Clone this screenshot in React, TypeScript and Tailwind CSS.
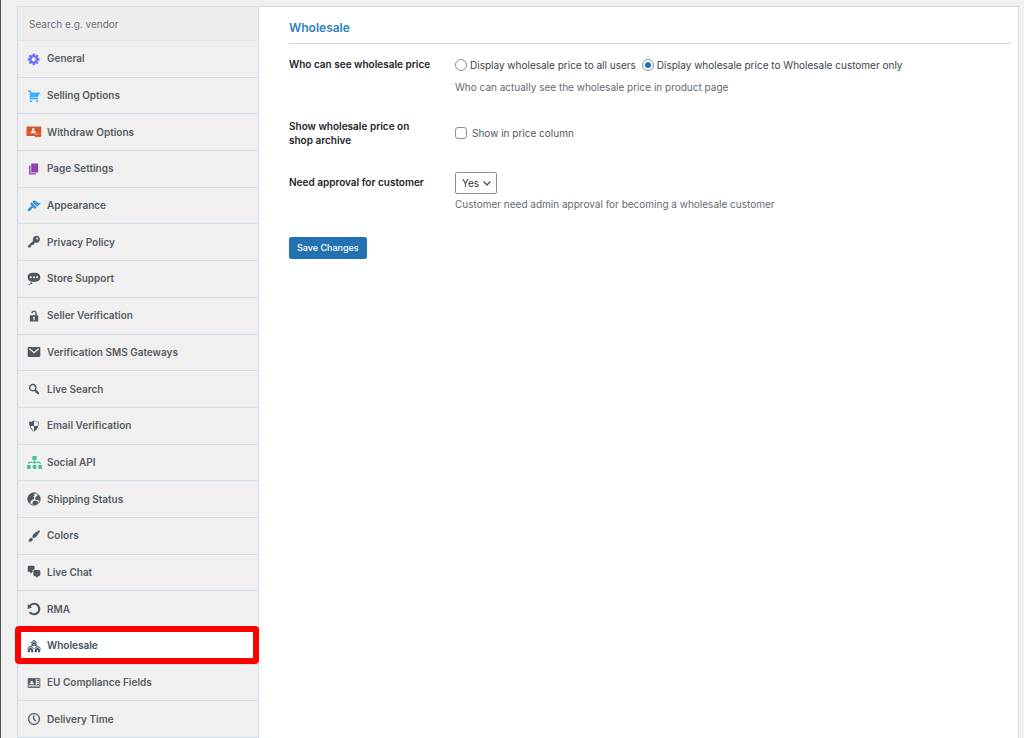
import React, { useState } from 'react';
import { FaSitemap } from 'react-icons/fa';

type MenuItem = {
  id: string;
  label: string;
  icon: React.ReactNode;
};

const Icon: React.FC<{ d: string; className?: string }> = ({ d, className = 'text-[#50575e]' }) => (
  <svg viewBox="0 0 20 20" fill="currentColor" fillRule="evenodd" className={`size-[14px] ${className}`} aria-hidden="true">
    <path d={d} />
  </svg>
);

const WithdrawIcon: React.FC = () => (
  <svg viewBox="0 0 16 14" className="w-4 h-[14px] -ml-px" aria-hidden="true">
    <path fill="#d9562b" d="M.5 1.5h14.800v9.500H.5z" />
    <path fill="#f0f0f0" d="M7.300 3a1.200 1.200 0 0 1 1.200 1.200c0 .7-.3 1.300-.6 1.600 1.100.3 2.100 1 2.200 2.500H4.500c.1-1.500 1.100-2.200 2.200-2.500-.3-.3-.6-.9-.6-1.600A1.200 1.200 0 0 1 7.300 3z" />
    <path fill="none" stroke="#f0f0f0" strokeWidth=".6" d="M9 9.300h6.500M9 11.300h6.500" />
    <circle cx="10.500" cy="11" r="1.500" fill="#d9562b" />
    <circle cx="13.500" cy="10.500" r="1.700" fill="#d9562b" />
  </svg>
);

const GlobeIcon: React.FC = () => (
  <svg viewBox="0 0 20 20" className="size-[14px] text-[#50575e]" aria-hidden="true">
    <circle cx="10" cy="10" r="8.800" fill="none" stroke="currentColor" strokeWidth="1.400" />
    <path
      fill="currentColor"
      d="M11 1.200C5.500.8 1.200 5 1.200 10c0 2.200.8 4.200 2.100 5.700L5 15.500l.3-2.300L7.500 11l2.300-.8.6-2.400-1.300-1.500L11 4.800l-.8-1.600zM13 6.800l2.800-2.900c2 1.500 3 3.700 3 6.100l-.8 3-2.600-1.500-3-.6-.9-2zM9.500 13l3.500-.9 2.800 1.900-.7 2.300-2.700 2-3.200.2-1.600-2.700z"
    />
  </svg>
);

const SupportIcon: React.FC = () => (
  <Icon d="M10 1c7 0 9 2.910 9 6.500S17 14 10 14s-9-2.910-9-6.500S3 1 10 1zM5.500 9C6.330 9 7 8.330 7 7.500S6.330 6 5.500 6 4 6.670 4 7.500 4.670 9 5.500 9zM10 9c.83 0 1.500-.67 1.500-1.500S10.830 6 10 6s-1.500.67-1.500 1.500S9.170 9 10 9zm4.500 0c.83 0 1.500-.67 1.500-1.500S15.330 6 14.500 6 13 6.670 13 7.500 13.670 9 14.500 9zM6 14.500a1.500 1.500 0 1 1 0 3 1.500 1.500 0 0 1 0-3zM3 17a1 1 0 1 1 0 2 1 1 0 0 1 0-2z" />
);

const MailIcon: React.FC = () => (
  <svg viewBox="0 0 20 20" className="size-[14px] text-[#50575e]" aria-hidden="true">
    <rect x="1" y="3" width="18" height="14" rx="1.500" fill="currentColor" />
    <path d="M3.500 5.500L10 11l6.500-5.500" fill="none" stroke="#f0f0f0" strokeWidth="1.800" />
  </svg>
);

const HousesIcon: React.FC = () => (
  <svg viewBox="0 0 20 20" fill="currentColor" fillRule="evenodd" className="size-[14px] text-[#3c4f60]" aria-hidden="true">
    <path d="M10 1.200l5 4.300-.8.900L10 2.900 5.800 6.400 5 5.500zM10 4l3.700 3.100v2.800H6.300V7.100zM9.100 7.200v1.900h1.800V7.200z" />
    <path d="M5 9.200l5 4.300-.8.900L5 10.900.8 14.400 0 13.500zM5 12l3.900 3.200V19H1.100v-3.800zm-.9 3.600V19h1.800v-3.400z" />
    <path d="M15 9.200l5 4.300-.8.900-4.200-3.500-4.200 3.500-.8-.9zM15 12l3.900 3.200V19h-7.800v-3.800zm-.9 3.600V19h1.800v-3.400z" />
  </svg>
);

const IdCardIcon: React.FC = () => (
  <svg viewBox="0 0 20 20" className="size-[14px] text-[#50575e]" aria-hidden="true">
    <path fill="none" stroke="currentColor" strokeWidth="1.300" d="M1.700 3.700h16.600v12.600H1.700z" />
    <path fill="currentColor" fillRule="evenodd" d="M2 4h10.500v9H2zm4.800 1.200c-1 0-1.700.8-1.700 1.800 0 .8.400 1.500.9 1.900-1.400.4-2.300 1.300-2.500 2.800h6.600c-.2-1.500-1.100-2.400-2.500-2.800.5-.4.900-1.100.9-1.900 0-1-.7-1.800-1.700-1.800z" />
    <path fill="currentColor" d="M5.200 5h3.200v2H5.200zM14 5h3v2h-3zM14 8.500h3v1.200h-3zM14 11.500h3v1.200h-3zM3 14h14v1H3z" />
  </svg>
);

const ClockIcon: React.FC = () => (
  <svg viewBox="0 0 20 20" fill="none" stroke="currentColor" strokeWidth="1.900" className="size-[14px] text-[#50575e]" aria-hidden="true">
    <circle cx="10" cy="10" r="7.800" />
    <path d="M9.500 5v5l3.300 3.300" />
  </svg>
);

const MENU: MenuItem[] = [
  {
    id: 'general',
    label: 'General',
    icon: <Icon className="text-[#6c70fb]" d="M18 12h-2.180c-.17.7-.44 1.350-.81 1.930l1.540 1.540-2.100 2.100-1.540-1.540c-.58.36-1.230.63-1.910.79V19H8v-2.180c-.68-.16-1.330-.43-1.910-.79l-1.540 1.540-2.120-2.120 1.540-1.540c-.36-.58-.63-1.230-.79-1.910H1V9.030h2.170c.16-.7.44-1.350.8-1.940L2.430 5.550l2.100-2.100 1.540 1.540c.58-.37 1.240-.64 1.930-.81V2h3v2.180c.68.16 1.330.43 1.910.79l1.540-1.540 2.120 2.120-1.540 1.540c.36.59.64 1.240.8 1.940H18V12zm-8.500 1.500c1.660 0 3-1.340 3-3s-1.340-3-3-3-3 1.340-3 3 1.340 3 3 3z" />,
  },
  {
    id: 'selling',
    label: 'Selling Options',
    icon: <Icon className="text-[#3eadfb]" d="M6 13h9c.55 0 1 .45 1 1s-.45 1-1 1H5c-.55 0-1-.45-1-1V4H2c-.55 0-1-.45-1-1s.45-1 1-1h3c.55 0 1 .45 1 1v2h13l-4 7H6v1zm-.5 3c.83 0 1.500.67 1.500 1.500S6.330 19 5.500 19 4 18.330 4 17.500 4.670 16 5.500 16zm9 0c.83 0 1.500.67 1.500 1.500s-.67 1.500-1.500 1.500-1.500-.67-1.500-1.500.67-1.500 1.500-1.500z" />,
  },
  { id: 'withdraw', label: 'Withdraw Options', icon: <WithdrawIcon /> },
  { id: 'pages', label: 'Page Settings', icon: <Icon className="text-[#8e44ad]" d="M6 15V2h10v13H6zm-1 1h8v2H3V5h2v11z" /> },
  {
    id: 'appearance',
    label: 'Appearance',
    icon: <Icon className="text-[#3498db]" d="M14.480 11.060L7.410 3.990l1.500-1.500c.5-.56 2.300-.47 3.510.32 1.210.8 1.430 1.280 2.910 2.100 1.180.64 2.450 1.260 4.450.85zm-.71.71L6.700 4.700 4.930 6.470c-.39.39-.39 1.020 0 1.410l1.060 1.060c.39.39.39 1.030 0 1.420-.6.6-1.430 1.110-2.210 1.690-.35.26-.7.53-1.010.84C1.430 14.230.4 16.080 1.400 17.070c.99 1 2.840-.03 4.180-1.360.31-.31.58-.66.85-1.020.57-.78 1.080-1.610 1.690-2.210.39-.39 1.020-.39 1.410 0l1.060 1.060c.39.39 1.020.39 1.410 0z" />,
  },
  {
    id: 'privacy',
    label: 'Privacy Policy',
    icon: <Icon d="M16.950 2.580c1.960 1.950 1.960 5.120 0 7.070-1.510 1.510-3.750 1.840-5.590 1.010l-1.870 3.310-2.990.31L5 18H2l-1-2 7.950-7.690c-.92-1.870-.62-4.180.93-5.730 1.950-1.960 5.120-1.960 7.070 0zm-2.510 3.790c.74 0 1.330-.6 1.330-1.340 0-.73-.59-1.330-1.330-1.330-.73 0-1.330.6-1.330 1.330 0 .74.6 1.340 1.330 1.340z" />,
  },
  { id: 'support', label: 'Store Support', icon: <SupportIcon /> },
  {
    id: 'seller',
    label: 'Seller Verification',
    icon: <Icon d="M12 9V6c0-1.100-.9-2-2-2s-2 .9-2 2H6c0-2.210 1.790-4 4-4s4 1.790 4 4v3h1c.55 0 1 .45 1 1v7c0 .55-.45 1-1 1H5c-.55 0-1-.45-1-1v-7c0-.55.45-1 1-1h7zm-1 7l-.36-2.150c.51-.24.86-.75.86-1.350 0-.83-.67-1.500-1.500-1.500s-1.500.67-1.500 1.500c0 .6.35 1.110.86 1.350L9 16h2z" />,
  },
  { id: 'sms', label: 'Verification SMS Gateways', icon: <MailIcon /> },
  {
    id: 'search',
    label: 'Live Search',
    icon: <Icon d="M12.140 4.180c1.870 1.870 2.110 4.750.72 6.890.12.1.22.21.36.31.2.16.47.36.81.59.34.24.56.39.66.47.42.31.73.57.94.78.32.32.6.65.84 1 .25.35.44.69.59 1.040.14.35.21.68.18 1-.02.32-.14.59-.36.81s-.49.34-.81.36c-.31.02-.65-.04-.99-.19-.35-.14-.7-.34-1.040-.59-.35-.24-.68-.52-1-.84-.21-.21-.47-.52-.77-.93-.1-.13-.25-.35-.47-.66-.22-.32-.4-.57-.56-.78-.16-.2-.29-.35-.44-.5-2.070 1.090-4.690.76-6.440-.98-2.140-2.150-2.140-5.640 0-7.780 2.150-2.150 5.630-2.150 7.780 0zm-1.410 6.360c1.360-1.370 1.360-3.580 0-4.950-1.370-1.370-3.590-1.370-4.950 0-1.370 1.370-1.370 3.580 0 4.950 1.360 1.370 3.580 1.370 4.950 0z" />,
  },
  { id: 'email', label: 'Email Verification', icon: <Icon d="M10 2s3 2 7 2c0 11-7 14-7 14S3 15 3 4c4 0 7-2 7-2zm0 8h5s1-1 1-5c0 0-5-1-6-2v7H5c1 4 5 7 5 7v-7z" /> },
  { id: 'social', label: 'Social API', icon: <FaSitemap preserveAspectRatio="none" className="h-[13px] w-[15px] text-[#4fc19c]" aria-hidden="true" /> },
  { id: 'shipping', label: 'Shipping Status', icon: <GlobeIcon /> },
  {
    id: 'colors',
    label: 'Colors',
    icon: <Icon d="M18.330 3.570s.27-.8-.31-1.360c-.53-.52-1.220-.24-1.220-.24-.61.3-5.760 3.470-7.670 5.570-.86.96-2.060 3.790-1.090 4.820.92.98 3.960-.17 4.790-1 2.060-2.060 5.210-7.170 5.500-7.790zM1.400 17.650c2.370-1.560 1.460-3.410 3.230-4.640.93-.65 2.220-.62 3.080.29.63.67.8 2.570-.16 3.460-1.570 1.450-4 1.550-6.150.89z" />,
  },
  {
    id: 'chat',
    label: 'Live Chat',
    icon: <Icon d="M11 6h-.82C9.070 6 8 7.200 8 8.160V10l-3 3v-3H3c-1.100 0-2-.9-2-2V3c0-1.100.9-2 2-2h6c1.100 0 2 .9 2 2v3zm0 1h6c1.100 0 2 .9 2 2v5c0 1.100-.9 2-2 2h-2v3l-3-3h-1c-1.100 0-2-.9-2-2V9c0-1.100.9-2 2-2z" />,
  },
  {
    id: 'rma',
    label: 'RMA',
    icon: <Icon d="M10.250 1.020c5.100 0 8.750 4.040 8.750 9s-3.650 9-8.750 9c-3.200 0-6.020-1.590-7.680-3.990l2.590-1.520c1.100 1.500 2.860 2.510 4.840 2.510 3.300 0 6-2.790 6-6s-2.700-6-6-6c-1.970 0-3.720 1-4.820 2.490L7 8.020l-6 2v-7L2.890 4.600c1.690-2.170 4.360-3.580 7.360-3.580z" />,
  },
  { id: 'wholesale', label: 'Wholesale', icon: <HousesIcon /> },
  { id: 'eu', label: 'EU Compliance Fields', icon: <IdCardIcon /> },
  { id: 'delivery', label: 'Delivery Time', icon: <ClockIcon /> },
];

const Sidebar: React.FC<{ activeId: string; onSelect: (id: string) => void }> = ({ activeId, onSelect }) => (
  <aside className="w-[241px] shrink-0 flex flex-col border-r border-[#cfdfea]">
    <input
      type="search"
      aria-label="Search settings"
      placeholder="Search e.g. vendor"
      className="h-[34px] w-full shrink-0 appearance-none rounded-none border-b border-[#e2e4e7] bg-[#ededed] px-[11px] text-[10px] text-[#50575e] placeholder:text-[#6c7178] outline-none"
    />
    <nav className="flex flex-1 flex-col">
      {MENU.map((item) => (
        <a
          key={item.id}
          href={`#${item.id}`}
          onClick={() => onSelect(item.id)}
          className={`relative flex min-h-9 flex-1 items-center border-b border-[#cfdfea] pl-[9px] text-[10px] font-semibold ${
            activeId === item.id ? 'bg-white text-[#3c4f60]' : 'text-[#565c63]'
          }`}
        >
          <span className="flex w-5 shrink-0 items-center">{item.icon}</span>
          {item.label}
          {activeId === item.id && <span className="pointer-events-none absolute -top-[2px] bottom-0 -left-[3px] -right-px z-10 rounded-sm border-[6px] border-[#ff0000]"></span>}
        </a>
      ))}
    </nav>
  </aside>
);

const RadioOption: React.FC<{ label: string; checked: boolean; onChange: () => void }> = ({ label, checked, onChange }) => (
  <label className="flex items-center gap-[3px] text-[#3c434a]">
    <input
      type="radio"
      name="wholesale_price_display"
      checked={checked}
      onChange={onChange}
      className="size-3 appearance-none rounded-full border border-[#8c8f94] bg-white p-[2px] bg-clip-content checked:bg-[#2271b1]"
    />
    {label}
  </label>
);

const App: React.FC = () => {
  const [activeId, setActiveId] = useState('wholesale');
  const [visibility, setVisibility] = useState('wholesale');
  const [showInArchive, setShowInArchive] = useState(false);
  const [approval, setApproval] = useState('yes');

  return (
    <div className="flex min-h-screen border-l border-[#50575e] bg-[#f0f0f0] pt-[6px] pr-[5px] pl-4 font-['Inter','Liberation_Sans',sans-serif] antialiased">
      <div className="flex flex-1 border border-b-0 border-[#cfdfea]">
        <Sidebar activeId={activeId} onSelect={setActiveId} />
        <main className="min-w-0 flex-1 bg-white pt-3 pr-[7px] pl-[30px]">
          <h2 className="border-b border-[#d0d7db] pb-[6px] text-[12px] leading-[18px] font-semibold text-[#2f82bd]">Wholesale</h2>
          <form onSubmit={(e) => e.preventDefault()} className="pt-[13px] text-[10px] leading-[14px]">
            <div className="grid grid-cols-[150px_1fr] gap-x-4">
              <div className="font-semibold text-[#1d2327]">Who can see wholesale price</div>
              <div className="text-[#646970]">
                <div role="radiogroup" aria-label="Who can see wholesale price" className="flex flex-wrap gap-x-[6px] pt-px">
                  <RadioOption label="Display wholesale price to all users" checked={visibility === 'all'} onChange={() => setVisibility('all')} />
                  <RadioOption label="Display wholesale price to Wholesale customer only" checked={visibility === 'wholesale'} onChange={() => setVisibility('wholesale')} />
                </div>
                <p className="pt-2">Who can actually see the wholesale price in product page</p>
              </div>
            </div>

            <div className="grid grid-cols-[150px_1fr] gap-x-4 pt-[25px]">
              <div className="pr-6 font-semibold text-[#1d2327]">Show wholesale price on shop archive</div>
              <label className="flex items-center gap-[5px] text-[#50575e]">
                <input
                  type="checkbox"
                  checked={showInArchive}
                  onChange={(e) => setShowInArchive(e.target.checked)}
                  className="size-3 appearance-none rounded-[3px] border border-[#8c8f94] bg-white checked:bg-[#2271b1]"
                />
                Show in price column
              </label>
            </div>

            <div className="grid grid-cols-[150px_1fr] gap-x-4 pt-[25px]">
              <label htmlFor="approval" className="pt-[3px] font-semibold text-[#1d2327]">Need approval for customer</label>
              <div className="text-[#646970]">
                <div className="relative w-[42px]">
                  <select
                    id="approval"
                    value={approval}
                    onChange={(e) => setApproval(e.target.value)}
                    className="block h-[22px] w-full appearance-none rounded-[2px] border border-[#8c8f94] bg-white pl-[6px] text-[10px] text-[#2c3338]"
                  >
                    <option value="yes">Yes</option>
                    <option value="no">No</option>
                  </select>
                  <svg viewBox="0 0 8 5" className="pointer-events-none absolute top-[9px] right-[6px] h-[5px] w-2" fill="none" stroke="#50575e" strokeWidth="1.400" aria-hidden="true">
                    <path d="M.7.6L4 4 7.300.6" />
                  </svg>
                </div>
                <p className="pt-[3px]">Customer need admin approval for becoming a wholesale customer</p>
              </div>
            </div>

            <button type="submit" className="mt-[26px] h-[22px] rounded-[2px] bg-[#2271b1] px-2 text-[9px] font-medium text-white">
              Save Changes
            </button>
          </form>
        </main>
      </div>
    </div>
  );
};

export default App;
